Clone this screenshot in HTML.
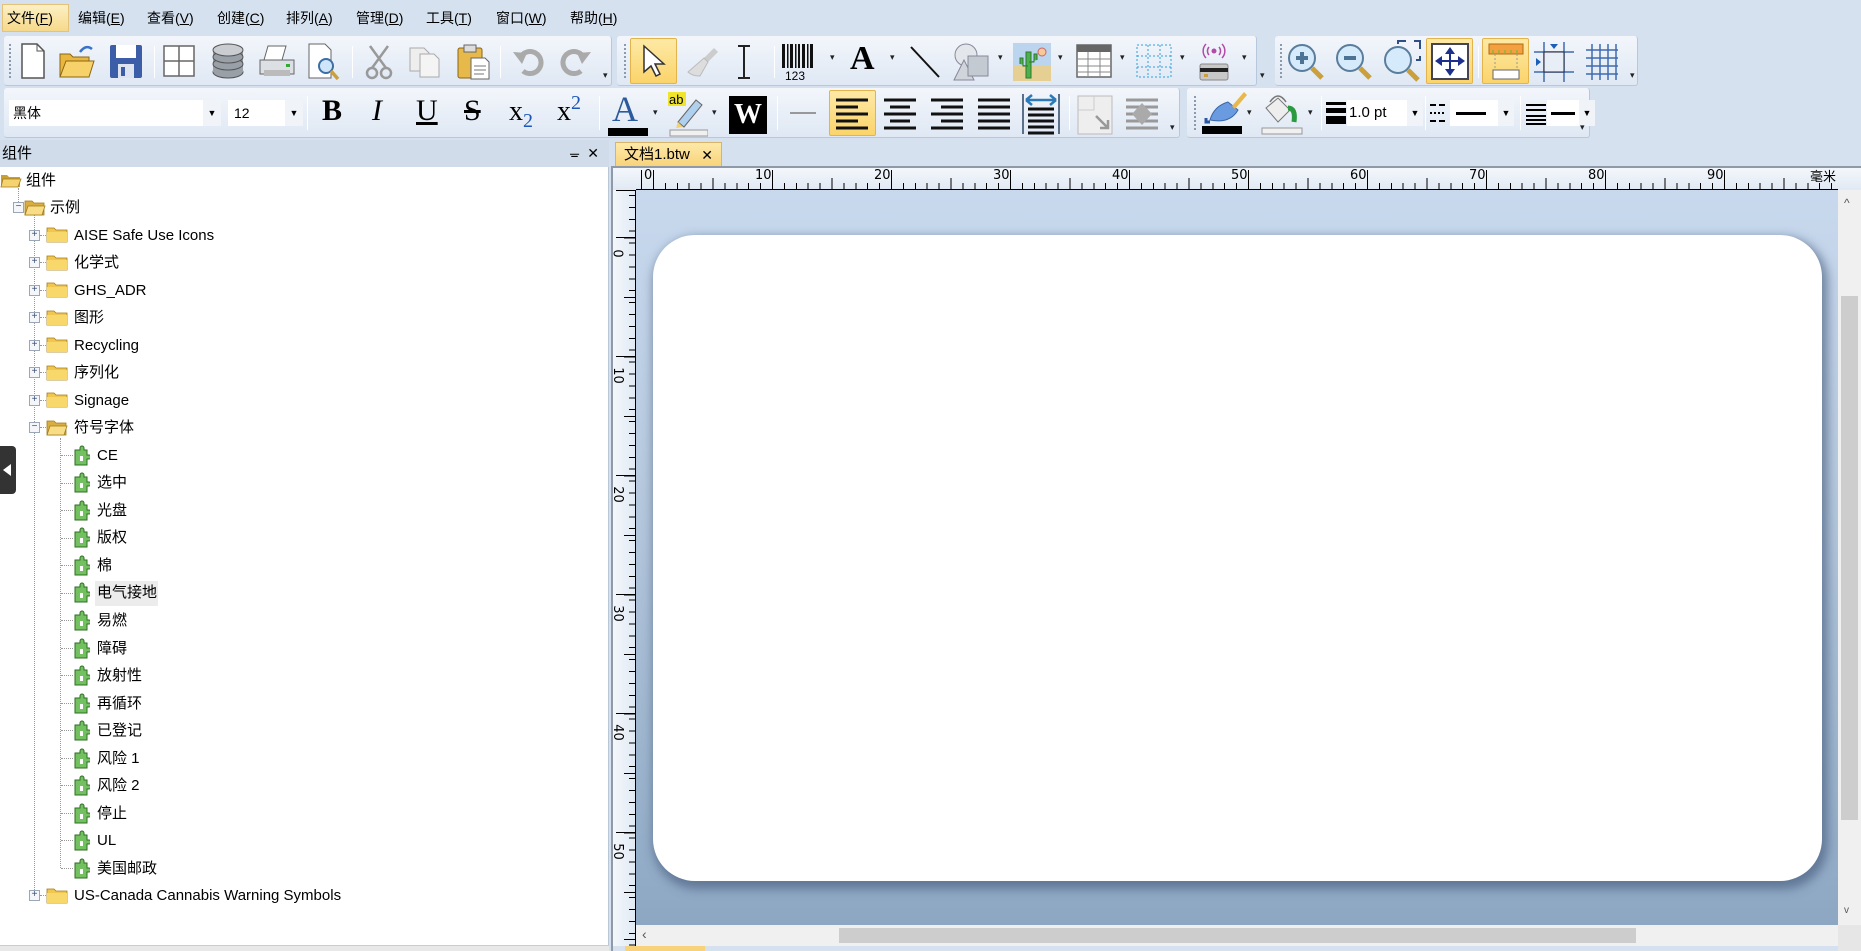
<!DOCTYPE html>
<html><head><meta charset="utf-8">
<style>
*{box-sizing:border-box;margin:0;padding:0}
body{width:1861px;height:951px;overflow:hidden;position:relative;background:#d5e1ef;font-family:"Liberation Sans","Noto Sans CJK SC",sans-serif;color:#000}
.a{position:absolute}
.menu{top:4px;height:28px;line-height:28px;font-size:14px}
.mi{position:absolute;top:0;height:28px;padding:0 4px}
.panel{position:absolute;border-radius:3px;background:linear-gradient(#f3f6fb,#dfe8f4);border-right:1px solid #b8c8dc;border-bottom:1px solid #b8c8dc}
.grip{position:absolute;width:2px;border-left:2px dotted #8a9bb0}
.sep{position:absolute;width:1px;background:#a9b9cc;border-right:1px solid #fff}
.hl{position:absolute;background:linear-gradient(#fde9a6,#fbd46a);border:1px solid #e3b44b;border-radius:2px}
.ic{position:absolute}
.dd{position:absolute;font-size:9px;color:#222}
.row{position:absolute;height:27px;line-height:27px;font-size:15px;white-space:nowrap}
.vl{position:absolute;border-left:1px dotted #999}
.hline{position:absolute;border-top:1px dotted #999;height:0}
.exp{position:absolute;width:11px;height:11px;border:1px solid #9aa7b8;background:#f4f6f9;font-size:10px;line-height:8px;text-align:center;color:#3a4f73}
.fold{position:absolute;width:22px;height:17px}
.pz{position:absolute;width:17px;height:21px}
</style></head><body>

<!-- menu -->
<div class="a menu" style="left:0;width:1861px">
<div class="mi" style="left:2px;width:67px;background:linear-gradient(#fdf0c4,#f6d98a);border:1px solid #e4c27a;line-height:26px">文件(<u>F</u>)</div>
<div class="mi" style="left:74px">编辑(<u>E</u>)</div>
<div class="mi" style="left:143px">查看(<u>V</u>)</div>
<div class="mi" style="left:213px">创建(<u>C</u>)</div>
<div class="mi" style="left:282px">排列(<u>A</u>)</div>
<div class="mi" style="left:352px">管理(<u>D</u>)</div>
<div class="mi" style="left:422px">工具(<u>T</u>)</div>
<div class="mi" style="left:492px">窗口(<u>W</u>)</div>
<div class="mi" style="left:566px">帮助(<u>H</u>)</div>
</div>

<!-- toolbar row 1 -->
<div class="panel" style="left:4px;top:36px;width:608px;height:50px"></div>
<div class="grip" style="left:9px;top:44px;height:34px"></div>
<div class="panel" style="left:617px;top:36px;width:640px;height:50px"></div>
<div class="grip" style="left:624px;top:44px;height:34px"></div>
<div class="panel" style="left:1275px;top:36px;width:363px;height:50px"></div>
<div class="grip" style="left:1280px;top:44px;height:34px"></div>

<!-- row1 icons -->
<svg class="ic" style="left:18px;top:42px" width="30" height="38"><path d="M4 2h15l7 7v27H4z" fill="#fff" stroke="#555" stroke-width="1.5"/><path d="M19 2v7h7" fill="none" stroke="#555"/></svg>
<svg class="ic" style="left:58px;top:42px" width="38" height="38"><path d="M2 12h10l3 3h16v20H2z" fill="#e9b73d" stroke="#8a6516"/><path d="M2 35l6-16h28l-5 16z" fill="#f7d26b" stroke="#8a6516"/><path d="M22 10q6-8 12-3" fill="none" stroke="#3a72c8" stroke-width="2.5"/></svg>
<svg class="ic" style="left:108px;top:42px" width="36" height="38"><rect x="2" y="3" width="32" height="33" rx="2" fill="#3c5ea8"/><rect x="8" y="3" width="20" height="13" fill="#fff"/><rect x="10" y="22" width="16" height="14" fill="#dfe5f0"/><rect x="13" y="25" width="4" height="9" fill="#3c5ea8"/></svg>
<div class="sep" style="left:154px;top:46px;height:32px"></div>
<svg class="ic" style="left:162px;top:44px" width="36" height="34"><rect x="2" y="2" width="30" height="30" fill="#fff" stroke="#666" stroke-width="1.5"/><path d="M2 17h30M17 2v30" stroke="#666" stroke-width="1.5"/></svg>
<svg class="ic" style="left:210px;top:42px" width="36" height="38"><g fill="#9aa0a8" stroke="#555"><ellipse cx="18" cy="30" rx="15" ry="6"/><rect x="3" y="8" width="30" height="22" stroke="none"/><ellipse cx="18" cy="22" rx="15" ry="6"/><ellipse cx="18" cy="15" rx="15" ry="6"/><ellipse cx="18" cy="8" rx="15" ry="6" fill="#c9ccd0"/></g></svg>
<svg class="ic" style="left:258px;top:42px" width="38" height="38"><path d="M10 4h18l-4 14H6z" fill="#fff" stroke="#666"/><path d="M2 18h34v14H2z" fill="#dcdfe4" stroke="#666"/><rect x="6" y="28" width="26" height="6" fill="#bbb"/><rect x="28" y="22" width="4" height="3" fill="#3a3"/></svg>
<svg class="ic" style="left:306px;top:42px" width="36" height="40"><path d="M3 2h16l6 6v28H3z" fill="#fff" stroke="#666"/><circle cx="20" cy="24" r="7" fill="#cfe6fa" stroke="#3a6ea5" stroke-width="2"/><path d="M25 29l7 8" stroke="#c9a03c" stroke-width="3.5"/></svg>
<div class="sep" style="left:352px;top:46px;height:32px"></div>
<svg class="ic" style="left:364px;top:44px" width="30" height="36"><g stroke="#999" stroke-width="2.5" fill="none"><path d="M6 2l16 22M24 2L8 24"/><circle cx="8" cy="29" r="5"/><circle cx="22" cy="29" r="5"/></g></svg>
<svg class="ic" style="left:408px;top:44px" width="34" height="36"><path d="M2 4h14l5 5v18H2z" fill="#eee" stroke="#aaa"/><path d="M12 10h14l5 5v18H12z" fill="#f4f4f4" stroke="#aaa"/></svg>
<svg class="ic" style="left:455px;top:42px" width="36" height="40"><rect x="3" y="6" width="24" height="30" rx="2" fill="#e7b84a" stroke="#8a6516"/><rect x="9" y="3" width="12" height="7" fill="#ddd" stroke="#666"/><path d="M16 16h14l4 4v17H16z" fill="#fff" stroke="#666"/><path d="M19 24h12M19 28h12M19 32h10" stroke="#777"/></svg>
<div class="sep" style="left:500px;top:46px;height:32px"></div>
<svg class="ic" style="left:512px;top:46px" width="32" height="30"><path d="M8 12a11 11 0 1 1 3 13" fill="none" stroke="#aaa" stroke-width="5"/><path d="M1 6l9 12 5-11z" fill="#aaa"/></svg>
<svg class="ic" style="left:560px;top:46px" width="32" height="30"><path d="M24 12a11 11 0 1 0-3 13" fill="none" stroke="#aaa" stroke-width="5"/><path d="M31 6l-9 12-5-11z" fill="#aaa"/></svg>
<div class="dd" style="left:603px;top:70px">▾</div>

<div class="hl" style="left:630px;top:38px;width:47px;height:46px"></div>
<svg class="ic" style="left:640px;top:44px" width="26" height="34"><path d="M4 2v26l7-6 5 10 4-2-5-10h9z" fill="#fff" stroke="#333" stroke-width="1.5"/></svg>
<svg class="ic" style="left:686px;top:46px" width="34" height="32"><path d="M28 2l4 4-10 10-4-4z" fill="#ccc"/><path d="M18 12l4 4-8 14Q6 30 2 26z" fill="#ddd" stroke="#bbb"/></svg>
<svg class="ic" style="left:736px;top:44px" width="16" height="36"><path d="M2 2h12M2 34h12M8 2v32" stroke="#222" stroke-width="2"/></svg>
<div class="sep" style="left:774px;top:46px;height:32px"></div>
<svg class="ic" style="left:780px;top:42px" width="36" height="40"><g fill="#111"><rect x="2" y="2" width="3" height="24"/><rect x="7" y="2" width="1.5" height="24"/><rect x="10" y="2" width="3" height="24"/><rect x="15" y="2" width="1.5" height="24"/><rect x="18" y="2" width="2" height="24"/><rect x="22" y="2" width="3" height="24"/><rect x="27" y="2" width="1.5" height="24"/><rect x="30" y="2" width="3" height="24"/></g><text x="5" y="38" font-size="12" font-family="Liberation Sans">123</text></svg>
<div class="dd" style="left:830px;top:52px">▾</div>
<div class="a" style="left:850px;top:40px;font:bold 34px 'Liberation Serif',serif">A</div>
<div class="dd" style="left:890px;top:52px">▾</div>
<svg class="ic" style="left:908px;top:44px" width="34" height="36"><path d="M3 3l28 30" stroke="#111" stroke-width="2"/></svg>
<svg class="ic" style="left:950px;top:42px" width="44" height="40"><circle cx="16" cy="13" r="11" fill="#e3e7ec" stroke="#889"/><path d="M14 18L4 38h20z" fill="#d0d5dc" stroke="#889"/><rect x="18" y="14" width="20" height="20" fill="#c4cad2" stroke="#889"/></svg>
<div class="dd" style="left:998px;top:52px">▾</div>
<svg class="ic" style="left:1012px;top:42px" width="40" height="40"><rect x="1" y="1" width="38" height="38" fill="#bcd5ef"/><rect x="1" y="24" width="38" height="15" fill="#e6cf93"/><path d="M14 36V10h5v26zM8 22v-6h3v8h5M25 18v-6h-3v8h-5" fill="#4cb04c" stroke="#2b7a2b"/><circle cx="30" cy="10" r="4" fill="#f7c99a" stroke="#c66"/></svg>
<div class="dd" style="left:1058px;top:52px">▾</div>
<svg class="ic" style="left:1076px;top:44px" width="36" height="34"><rect x="1" y="1" width="34" height="32" fill="#fff" stroke="#666" stroke-width="1.5"/><rect x="1" y="1" width="34" height="7" fill="#666"/><path d="M1 15h34M1 22h34M1 28h34M12 8v25M24 8v25" stroke="#888"/></svg>
<div class="dd" style="left:1120px;top:52px">▾</div>
<svg class="ic" style="left:1136px;top:44px" width="36" height="34"><g stroke="#2ea0e0" stroke-dasharray="2 2" fill="none"><rect x="1" y="1" width="34" height="32"/><path d="M12 1v32M24 1v32M1 12h34M1 23h34"/></g></svg>
<div class="dd" style="left:1180px;top:52px">▾</div>
<svg class="ic" style="left:1196px;top:40px" width="36" height="42"><g fill="none" stroke="#b24aa8" stroke-width="1.5"><path d="M10 4a10 10 0 0 0 0 14M26 4a10 10 0 0 1 0 14M13 7a6 6 0 0 0 0 8M23 7a6 6 0 0 1 0 8"/></g><circle cx="18" cy="11" r="2.5" fill="#b24aa8"/><rect x="4" y="24" width="28" height="16" rx="2" fill="#c8c8c8" stroke="#888"/><rect x="4" y="28" width="28" height="4" fill="#222"/><rect x="8" y="34" width="4" height="3" fill="#c9a03c"/></svg>
<div class="dd" style="left:1242px;top:52px">▾</div>
<div class="dd" style="left:1260px;top:70px">▾</div>

<svg class="ic" style="left:1286px;top:42px" width="40" height="40"><circle cx="16" cy="16" r="13" fill="#d5ebfb" stroke="#5a7d9c" stroke-width="2"/><path d="M26 26l10 10" stroke="#c9a03c" stroke-width="5"/><path d="M10 16h12M16 10v12" stroke="#4d7394" stroke-width="4"/></svg>
<svg class="ic" style="left:1334px;top:42px" width="40" height="40"><circle cx="16" cy="16" r="13" fill="#d5ebfb" stroke="#5a7d9c" stroke-width="2"/><path d="M26 26l10 10" stroke="#c9a03c" stroke-width="5"/><path d="M10 16h12" stroke="#4d7394" stroke-width="4"/></svg>
<svg class="ic" style="left:1382px;top:40px" width="42" height="42"><circle cx="16" cy="20" r="13" fill="#d5ebfb" stroke="#5a7d9c" stroke-width="2"/><path d="M26 30l10 10" stroke="#c9a03c" stroke-width="5"/><path d="M16 4V1h8M32 1h6v8M38 16v4h-4" stroke="#2c4f86" stroke-width="2" fill="none"/></svg>
<div class="hl" style="left:1426px;top:38px;width:47px;height:46px"></div>
<svg class="ic" style="left:1431px;top:43px" width="38" height="37"><rect x="1" y="1" width="36" height="35" fill="#fff" stroke="#445" stroke-width="2"/><g fill="#1b2f8c"><path d="M19 4l-5 7h10zM19 33l-5-7h10zM4 18l7-5v10zM34 18l-7-5v10z"/></g><path d="M19 9v20M9 18h20" stroke="#1b2f8c" stroke-width="2"/></svg>
<div class="sep" style="left:1478px;top:46px;height:32px"></div>
<div class="hl" style="left:1482px;top:38px;width:47px;height:46px"></div>
<svg class="ic" style="left:1487px;top:42px" width="38" height="40"><rect x="2" y="2" width="34" height="10" fill="#f4a040" stroke="#b06a12"/><path d="M6 8v4M12 8v4M18 8v4M24 8v4M30 8v4" stroke="#6b3"/><path d="M8 12v16M30 12v16" stroke="#999" stroke-dasharray="2 2"/><rect x="6" y="28" width="26" height="9" fill="#fff" stroke="#666"/></svg>
<svg class="ic" style="left:1534px;top:42px" width="40" height="40"><path d="M10 0v40M30 0v40M0 10h40M0 30h40" stroke="#3e6bb0" stroke-width="1.5"/><rect x="10" y="10" width="20" height="20" fill="#e8eef6" stroke="#223"/><path d="M16 2l4 5 4-5zM2 16l5 4-5 4z" fill="#1c5fb8"/></svg>
<svg class="ic" style="left:1582px;top:42px" width="40" height="40"><path d="M4 8h32M4 16h32M4 24h32M4 32h32M10 2v36M18 2v36M26 2v36M34 2v36" stroke="#3e6bb0" stroke-width="1.5"/></svg>
<div class="dd" style="left:1630px;top:70px">▾</div>

<!-- toolbar row 2 -->
<div class="panel" style="left:4px;top:88px;width:1176px;height:50px"></div>
<div class="panel" style="left:1187px;top:88px;width:403px;height:50px"></div>
<div class="grip" style="left:1194px;top:96px;height:34px"></div>
<div class="a" style="left:9px;top:100px;width:212px;height:26px;background:#fff;font-size:14px;line-height:26px;padding-left:4px">黑体<span style="position:absolute;right:0;top:0;width:18px;height:26px;background:#f0f3f8;font-size:9px;text-align:center">▼</span></div>
<div class="a" style="left:228px;top:100px;width:75px;height:26px;background:#fff;font-size:14px;line-height:26px;padding-left:6px">12<span style="position:absolute;right:0;top:0;width:18px;height:26px;background:#f0f3f8;font-size:9px;text-align:center">▼</span></div>
<div class="sep" style="left:307px;top:96px;height:34px"></div>
<div class="a" style="left:322px;top:94px;font:bold 30px 'Liberation Serif',serif">B</div>
<div class="a" style="left:372px;top:94px;font:italic 30px 'Liberation Serif',serif">I</div>
<div class="a" style="left:416px;top:94px;font:30px 'Liberation Serif',serif;text-decoration:underline">U</div>
<div class="a" style="left:464px;top:94px;font:30px 'Liberation Serif',serif;text-decoration:line-through">S</div>
<div class="a" style="left:509px;top:96px;font:28px 'Liberation Serif',serif">x<span style="font-size:20px;color:#1d56b8;vertical-align:-7px">2</span></div>
<div class="a" style="left:557px;top:92px;font:28px 'Liberation Serif',serif">x<span style="font-size:20px;color:#1d56b8;vertical-align:11px">2</span></div>
<div class="sep" style="left:599px;top:96px;height:34px"></div>
<div class="a" style="left:612px;top:88px;font:36px 'Liberation Serif',serif;color:#2b5b9c">A</div>
<div class="a" style="left:608px;top:128px;width:40px;height:8px;background:#000"></div>
<div class="dd" style="left:653px;top:107px">▾</div>
<svg class="ic" style="left:668px;top:92px" width="40" height="46"><rect x="0" y="0" width="18" height="14" fill="#f0e52c"/><text x="1" y="12" font-size="13" font-family="Liberation Sans">ab</text><path d="M10 30l18-22 6 5-18 22z" fill="#b0d0f0" stroke="#666"/><path d="M10 30l-2 6 7-1z" fill="#f0d070"/><rect x="2" y="38" width="38" height="6" fill="#f0f0f0" stroke="#999"/></svg>
<div class="dd" style="left:712px;top:107px">▾</div>
<div class="a" style="left:729px;top:96px;width:38px;height:38px;background:#000;color:#fff;font:bold 28px 'Liberation Serif',serif;text-align:center;line-height:38px">W</div>
<div class="sep" style="left:777px;top:96px;height:34px"></div>
<div class="a" style="left:790px;top:112px;width:26px;height:2px;background:#999"></div>
<div class="hl" style="left:829px;top:90px;width:47px;height:46px"></div>
<svg class="ic" style="left:832px;top:96px" width="40" height="36"><g stroke="#111" stroke-width="3"><path d="M4 4h32M4 11h22M4 18h32M4 25h22M4 32h32"/></g></svg>
<svg class="ic" style="left:880px;top:96px" width="40" height="36"><g stroke="#111" stroke-width="3"><path d="M4 4h32M10 11h20M4 18h32M10 25h20M4 32h32"/></g></svg>
<svg class="ic" style="left:927px;top:96px" width="40" height="36"><g stroke="#111" stroke-width="3"><path d="M4 4h32M14 11h22M4 18h32M14 25h22M4 32h32"/></g></svg>
<svg class="ic" style="left:974px;top:96px" width="40" height="36"><g stroke="#111" stroke-width="3"><path d="M4 4h32M4 11h32M4 18h32M4 25h32M4 32h32"/></g></svg>
<svg class="ic" style="left:1020px;top:92px" width="42" height="44"><path d="M3 2v40M39 2v40" stroke="#5a6f88" stroke-width="2"/><path d="M6 8h30M6 8l6-5M6 8l6 5M36 8l-6-5M36 8l-6 5" stroke="#2c7ab8" stroke-width="2.5" fill="none"/><g stroke="#111" stroke-width="3"><path d="M8 17h26M8 23h26M8 29h26M8 35h26M8 41h26"/></g></svg>
<div class="sep" style="left:1069px;top:96px;height:34px"></div>
<svg class="ic" style="left:1076px;top:94px" width="40" height="42"><rect x="2" y="2" width="34" height="38" fill="#eee" stroke="#bbb"/><path d="M2 16h16V2" fill="none" stroke="#ccc"/><path d="M20 22l12 12M32 26v8h-8" stroke="#999" stroke-width="2.5" fill="none"/></svg>
<svg class="ic" style="left:1122px;top:96px" width="40" height="36"><g stroke="#999" stroke-width="3"><path d="M4 4h32M4 11h32M4 18h32M4 25h32M4 32h32"/></g><path d="M20 7l10 11-10 11-10-11z" fill="#aaa"/></svg>
<div class="dd" style="left:1170px;top:122px">▾</div>

<svg class="ic" style="left:1200px;top:90px" width="50" height="46"><path d="M10 30q4-14 18-18l10 8q-8 14-28 10z" fill="#6a9ae0" stroke="#3a66a8"/><path d="M32 16l12-14 3 3-12 14z" fill="#e8b84a"/><path d="M6 28v4h4" stroke="#2a55a0" stroke-width="3" fill="none"/><rect x="2" y="36" width="40" height="8" fill="#000"/></svg>
<div class="dd" style="left:1247px;top:107px">▾</div>
<svg class="ic" style="left:1260px;top:90px" width="44" height="46"><path d="M6 18l12-10 12 12-12 12z" fill="#eee" stroke="#777"/><path d="M10 12q8-12 16 0" fill="none" stroke="#777" stroke-width="1.5"/><path d="M28 18q8 0 6 14" stroke="#2a9a40" stroke-width="5" fill="none"/><rect x="2" y="38" width="40" height="6" fill="#f0f0f0" stroke="#999"/></svg>
<div class="dd" style="left:1308px;top:107px">▾</div>
<div class="sep" style="left:1321px;top:96px;height:34px"></div>
<div class="a" style="left:1326px;top:102px;width:20px;height:22px;background:linear-gradient(#000 0 3px,transparent 3px 6px,#000 6px 11px,transparent 11px 14px,#000 14px)"></div>
<div class="a" style="left:1347px;top:100px;width:76px;height:26px;background:#fff;font-size:15px;line-height:26px;padding-left:2px">1.0 pt<span style="position:absolute;right:0;top:0;width:16px;height:26px;background:#f0f3f8;font-size:9px;text-align:center">▼</span></div>
<div class="sep" style="left:1425px;top:96px;height:34px"></div>
<svg class="ic" style="left:1428px;top:102px" width="26" height="24"><path d="M2 3h6M11 3h6M2 11h2M6 11h2M10 11h2M14 11h2M2 19h6M11 19h6" stroke="#000" stroke-width="2"/></svg>
<div class="a" style="left:1450px;top:100px;width:64px;height:26px;background:#fff"><div class="a" style="left:6px;top:12px;width:30px;height:3px;background:#000"></div><span style="position:absolute;right:0;top:0;width:16px;height:26px;background:#f0f3f8;font-size:9px;line-height:26px;text-align:center">▼</span></div>
<div class="sep" style="left:1520px;top:96px;height:34px"></div>
<svg class="ic" style="left:1524px;top:102px" width="24" height="24"><path d="M2 3h20M2 8h20M2 14h20M2 18h20M2 22h20" stroke="#000" stroke-width="2"/></svg>
<div class="a" style="left:1547px;top:100px;width:48px;height:26px;background:#fff"><div class="a" style="left:4px;top:12px;width:24px;height:3px;background:#000"></div><span style="position:absolute;right:0;top:0;width:16px;height:26px;background:#f0f3f8;font-size:9px;line-height:26px;text-align:center">▼</span></div>
<div class="dd" style="left:1580px;top:122px">▾</div>

<!-- left panel -->
<div class="a" style="left:0;top:140px;width:609px;height:811px;background:#fff;border-right:1px solid #b8c6d6"></div>
<div class="a" style="left:0;top:140px;width:609px;height:27px;background:#d0dcea;font-size:15px;line-height:27px;padding-left:2px">组件<span style="position:absolute;right:30px;font-size:13px">ᚚ</span><span style="position:absolute;right:10px;font-size:14px">✕</span></div>
<div class="a" style="left:0;top:945px;width:609px;height:6px;background:#e8e8e8;border-top:1px solid #ccc"></div>
<div class="a" style="left:0;top:446px;width:16px;height:48px;background:#333;border-radius:0 4px 4px 0"><div class="a" style="left:3px;top:18px;border-right:8px solid #fff;border-top:6px solid transparent;border-bottom:6px solid transparent"></div></div>

<!-- tree lines -->
<div class="vl" style="left:18px;top:188px;height:20px"></div>
<div class="vl" style="left:34px;top:214px;height:682px"></div>
<div class="vl" style="left:60px;top:438px;height:430px"></div>
<div class="hline" style="left:18px;top:207px;width:8px"></div>

<!-- rows -->
<svg class="fold" style="left:0;top:171px" viewBox="0 0 22 17"><path d="M1 4h6l2 2h11v10H1z" fill="#c9a032"/><path d="M3 8h18l-3 8H1z" fill="#f5d370" stroke="#a47b1a" stroke-width=".8"/></svg>
<div class="row" style="left:26px;top:167px">组件</div>

<div class="exp" style="left:13px;top:202px">−</div>
<svg class="fold" style="left:24px;top:199px" viewBox="0 0 22 17"><path d="M1 2h7l2 2h10v12H1z" fill="#d9ad40" stroke="#a47b1a" stroke-width=".8"/><path d="M4 7h17l-3 9H1z" fill="#f8dc86" stroke="#a47b1a" stroke-width=".8"/></svg>
<div class="row" style="left:50px;top:194px">示例</div>

<div class="exp" style="left:29px;top:230px">+</div><div class="hline" style="left:40px;top:235px;width:6px"></div>
<svg class="fold" style="left:46px;top:226px" viewBox="0 0 22 17"><path d="M1 2h7l2 2h11v12H1z" fill="#f0c64e" stroke="#a47b1a" stroke-width=".8"/><rect x="1" y="6" width="20" height="10" fill="#f8d86a"/></svg>
<div class="row" style="left:74px;top:222px">AISE Safe Use Icons</div>

<div class="exp" style="left:29px;top:257px">+</div><div class="hline" style="left:40px;top:262px;width:6px"></div>
<svg class="fold" style="left:46px;top:254px" viewBox="0 0 22 17"><path d="M1 2h7l2 2h11v12H1z" fill="#f0c64e" stroke="#a47b1a" stroke-width=".8"/><rect x="1" y="6" width="20" height="10" fill="#f8d86a"/></svg>
<div class="row" style="left:74px;top:249px">化学式</div>

<div class="exp" style="left:29px;top:285px">+</div><div class="hline" style="left:40px;top:290px;width:6px"></div>
<svg class="fold" style="left:46px;top:281px" viewBox="0 0 22 17"><path d="M1 2h7l2 2h11v12H1z" fill="#f0c64e" stroke="#a47b1a" stroke-width=".8"/><rect x="1" y="6" width="20" height="10" fill="#f8d86a"/></svg>
<div class="row" style="left:74px;top:277px">GHS_ADR</div>

<div class="exp" style="left:29px;top:312px">+</div><div class="hline" style="left:40px;top:317px;width:6px"></div>
<svg class="fold" style="left:46px;top:309px" viewBox="0 0 22 17"><path d="M1 2h7l2 2h11v12H1z" fill="#f0c64e" stroke="#a47b1a" stroke-width=".8"/><rect x="1" y="6" width="20" height="10" fill="#f8d86a"/></svg>
<div class="row" style="left:74px;top:304px">图形</div>

<div class="exp" style="left:29px;top:340px">+</div><div class="hline" style="left:40px;top:345px;width:6px"></div>
<svg class="fold" style="left:46px;top:336px" viewBox="0 0 22 17"><path d="M1 2h7l2 2h11v12H1z" fill="#f0c64e" stroke="#a47b1a" stroke-width=".8"/><rect x="1" y="6" width="20" height="10" fill="#f8d86a"/></svg>
<div class="row" style="left:74px;top:332px">Recycling</div>

<div class="exp" style="left:29px;top:367px">+</div><div class="hline" style="left:40px;top:372px;width:6px"></div>
<svg class="fold" style="left:46px;top:364px" viewBox="0 0 22 17"><path d="M1 2h7l2 2h11v12H1z" fill="#f0c64e" stroke="#a47b1a" stroke-width=".8"/><rect x="1" y="6" width="20" height="10" fill="#f8d86a"/></svg>
<div class="row" style="left:74px;top:359px">序列化</div>

<div class="exp" style="left:29px;top:395px">+</div><div class="hline" style="left:40px;top:400px;width:6px"></div>
<svg class="fold" style="left:46px;top:391px" viewBox="0 0 22 17"><path d="M1 2h7l2 2h11v12H1z" fill="#f0c64e" stroke="#a47b1a" stroke-width=".8"/><rect x="1" y="6" width="20" height="10" fill="#f8d86a"/></svg>
<div class="row" style="left:74px;top:387px">Signage</div>

<div class="exp" style="left:29px;top:422px">−</div><div class="hline" style="left:40px;top:427px;width:6px"></div>
<svg class="fold" style="left:46px;top:419px" viewBox="0 0 22 17"><path d="M1 2h7l2 2h10v12H1z" fill="#d9ad40" stroke="#a47b1a" stroke-width=".8"/><path d="M4 7h17l-3 9H1z" fill="#f8dc86" stroke="#a47b1a" stroke-width=".8"/></svg>
<div class="row" style="left:74px;top:414px">符号字体</div>

<!-- leaf rows -->
<div class="a" style="left:95px;top:581px;width:63px;height:25px;background:#ececec"></div>
<div id="leaves"></div>
<div class="hline" style="left:61px;top:455px;width:12px"></div><svg class="pz" style="left:73px;top:445px" viewBox="0 0 17 21"><path d="M4 5h3V3a2 2 0 0 1 4 0v2h3v5h2a2 2 0 0 1 0 4h-2v6H2V5z" fill="#72c060" stroke="#2f6e22"/><path d="M7 11h3v5H7" fill="#fff"/></svg><div class="row" style="left:97px;top:442px">CE</div>
<div class="hline" style="left:61px;top:483px;width:12px"></div><svg class="pz" style="left:73px;top:472px" viewBox="0 0 17 21"><path d="M4 5h3V3a2 2 0 0 1 4 0v2h3v5h2a2 2 0 0 1 0 4h-2v6H2V5z" fill="#72c060" stroke="#2f6e22"/><path d="M7 11h3v5H7" fill="#fff"/></svg><div class="row" style="left:97px;top:469px">选中</div>
<div class="hline" style="left:61px;top:510px;width:12px"></div><svg class="pz" style="left:73px;top:500px" viewBox="0 0 17 21"><path d="M4 5h3V3a2 2 0 0 1 4 0v2h3v5h2a2 2 0 0 1 0 4h-2v6H2V5z" fill="#72c060" stroke="#2f6e22"/><path d="M7 11h3v5H7" fill="#fff"/></svg><div class="row" style="left:97px;top:497px">光盘</div>
<div class="hline" style="left:61px;top:538px;width:12px"></div><svg class="pz" style="left:73px;top:527px" viewBox="0 0 17 21"><path d="M4 5h3V3a2 2 0 0 1 4 0v2h3v5h2a2 2 0 0 1 0 4h-2v6H2V5z" fill="#72c060" stroke="#2f6e22"/><path d="M7 11h3v5H7" fill="#fff"/></svg><div class="row" style="left:97px;top:524px">版权</div>
<div class="hline" style="left:61px;top:565px;width:12px"></div><svg class="pz" style="left:73px;top:555px" viewBox="0 0 17 21"><path d="M4 5h3V3a2 2 0 0 1 4 0v2h3v5h2a2 2 0 0 1 0 4h-2v6H2V5z" fill="#72c060" stroke="#2f6e22"/><path d="M7 11h3v5H7" fill="#fff"/></svg><div class="row" style="left:97px;top:552px">棉</div>
<div class="hline" style="left:61px;top:593px;width:12px"></div><svg class="pz" style="left:73px;top:582px" viewBox="0 0 17 21"><path d="M4 5h3V3a2 2 0 0 1 4 0v2h3v5h2a2 2 0 0 1 0 4h-2v6H2V5z" fill="#72c060" stroke="#2f6e22"/><path d="M7 11h3v5H7" fill="#fff"/></svg><div class="row" style="left:97px;top:579px">电气接地</div>
<div class="hline" style="left:61px;top:620px;width:12px"></div><svg class="pz" style="left:73px;top:610px" viewBox="0 0 17 21"><path d="M4 5h3V3a2 2 0 0 1 4 0v2h3v5h2a2 2 0 0 1 0 4h-2v6H2V5z" fill="#72c060" stroke="#2f6e22"/><path d="M7 11h3v5H7" fill="#fff"/></svg><div class="row" style="left:97px;top:607px">易燃</div>
<div class="hline" style="left:61px;top:648px;width:12px"></div><svg class="pz" style="left:73px;top:638px" viewBox="0 0 17 21"><path d="M4 5h3V3a2 2 0 0 1 4 0v2h3v5h2a2 2 0 0 1 0 4h-2v6H2V5z" fill="#72c060" stroke="#2f6e22"/><path d="M7 11h3v5H7" fill="#fff"/></svg><div class="row" style="left:97px;top:635px">障碍</div>
<div class="hline" style="left:61px;top:675px;width:12px"></div><svg class="pz" style="left:73px;top:665px" viewBox="0 0 17 21"><path d="M4 5h3V3a2 2 0 0 1 4 0v2h3v5h2a2 2 0 0 1 0 4h-2v6H2V5z" fill="#72c060" stroke="#2f6e22"/><path d="M7 11h3v5H7" fill="#fff"/></svg><div class="row" style="left:97px;top:662px">放射性</div>
<div class="hline" style="left:61px;top:703px;width:12px"></div><svg class="pz" style="left:73px;top:693px" viewBox="0 0 17 21"><path d="M4 5h3V3a2 2 0 0 1 4 0v2h3v5h2a2 2 0 0 1 0 4h-2v6H2V5z" fill="#72c060" stroke="#2f6e22"/><path d="M7 11h3v5H7" fill="#fff"/></svg><div class="row" style="left:97px;top:690px">再循环</div>
<div class="hline" style="left:61px;top:730px;width:12px"></div><svg class="pz" style="left:73px;top:720px" viewBox="0 0 17 21"><path d="M4 5h3V3a2 2 0 0 1 4 0v2h3v5h2a2 2 0 0 1 0 4h-2v6H2V5z" fill="#72c060" stroke="#2f6e22"/><path d="M7 11h3v5H7" fill="#fff"/></svg><div class="row" style="left:97px;top:717px">已登记</div>
<div class="hline" style="left:61px;top:758px;width:12px"></div><svg class="pz" style="left:73px;top:748px" viewBox="0 0 17 21"><path d="M4 5h3V3a2 2 0 0 1 4 0v2h3v5h2a2 2 0 0 1 0 4h-2v6H2V5z" fill="#72c060" stroke="#2f6e22"/><path d="M7 11h3v5H7" fill="#fff"/></svg><div class="row" style="left:97px;top:745px">风险 1</div>
<div class="hline" style="left:61px;top:785px;width:12px"></div><svg class="pz" style="left:73px;top:775px" viewBox="0 0 17 21"><path d="M4 5h3V3a2 2 0 0 1 4 0v2h3v5h2a2 2 0 0 1 0 4h-2v6H2V5z" fill="#72c060" stroke="#2f6e22"/><path d="M7 11h3v5H7" fill="#fff"/></svg><div class="row" style="left:97px;top:772px">风险 2</div>
<div class="hline" style="left:61px;top:813px;width:12px"></div><svg class="pz" style="left:73px;top:803px" viewBox="0 0 17 21"><path d="M4 5h3V3a2 2 0 0 1 4 0v2h3v5h2a2 2 0 0 1 0 4h-2v6H2V5z" fill="#72c060" stroke="#2f6e22"/><path d="M7 11h3v5H7" fill="#fff"/></svg><div class="row" style="left:97px;top:800px">停止</div>
<div class="hline" style="left:61px;top:840px;width:12px"></div><svg class="pz" style="left:73px;top:830px" viewBox="0 0 17 21"><path d="M4 5h3V3a2 2 0 0 1 4 0v2h3v5h2a2 2 0 0 1 0 4h-2v6H2V5z" fill="#72c060" stroke="#2f6e22"/><path d="M7 11h3v5H7" fill="#fff"/></svg><div class="row" style="left:97px;top:827px">UL</div>
<div class="hline" style="left:61px;top:868px;width:12px"></div><svg class="pz" style="left:73px;top:858px" viewBox="0 0 17 21"><path d="M4 5h3V3a2 2 0 0 1 4 0v2h3v5h2a2 2 0 0 1 0 4h-2v6H2V5z" fill="#72c060" stroke="#2f6e22"/><path d="M7 11h3v5H7" fill="#fff"/></svg><div class="row" style="left:97px;top:855px">美国邮政</div>

<div class="exp" style="left:29px;top:890px">+</div><div class="hline" style="left:40px;top:895px;width:6px"></div>
<svg class="fold" style="left:46px;top:887px" viewBox="0 0 22 17"><path d="M1 2h7l2 2h11v12H1z" fill="#f0c64e" stroke="#a47b1a" stroke-width=".8"/><rect x="1" y="6" width="20" height="10" fill="#f8d86a"/></svg>
<div class="row" style="left:74px;top:882px">US-Canada Cannabis Warning Symbols</div>

<!-- document area -->
<div class="a" style="left:615px;top:142px;width:107px;height:25px;background:linear-gradient(#fde9a8,#f8d27a);border:1px solid #d8b46a;border-bottom:none;font-size:15px;line-height:24px;padding-left:8px">文档1.btw<span style="position:absolute;right:8px;font-size:14px">✕</span></div>
<div class="a" style="left:611px;top:166px;width:1250px;height:2px;background:#8e9aa8"></div>
<div class="a" style="left:611px;top:168px;width:2px;height:783px;background:#8e9aa8"></div>
<!-- horizontal ruler -->
<div class="a" style="left:613px;top:168px;width:1248px;height:22px;background:linear-gradient(#f4f7fb,#e0e9f4)"></div>
<div class="a" style="left:636px;top:183px;width:1202px;height:6px;background:repeating-linear-gradient(90deg,transparent 0 5px,#000 5px 6px,transparent 6px 11.9px);background-position:12px 0"></div>
<div class="a" style="left:636px;top:178px;width:1202px;height:11px;background:repeating-linear-gradient(90deg,#000 0 1px,transparent 1px 59.5px);background-position:17px 0"></div>
<div class="a" style="left:636px;top:170px;width:1202px;height:19px;background:repeating-linear-gradient(90deg,#000 0 1px,transparent 1px 119px);background-position:17px 0"></div>
<div class="a" style="left:636px;top:189px;width:1202px;height:1px;background:#000"></div>
<div class="a" style="left:613px;top:167px;width:1248px;height:22px;font:13px 'DejaVu Sans',sans-serif">
<span class="a" style="left:31px;top:1px">0</span><span class="a" style="left:142px;top:1px">10</span><span class="a" style="left:261px;top:1px">20</span><span class="a" style="left:380px;top:1px">30</span><span class="a" style="left:499px;top:1px">40</span><span class="a" style="left:618px;top:1px">50</span><span class="a" style="left:737px;top:1px">60</span><span class="a" style="left:856px;top:1px">70</span><span class="a" style="left:975px;top:1px">80</span><span class="a" style="left:1094px;top:1px">90</span><span class="a" style="left:1197px;top:-1px;font-family:'Noto Sans CJK SC',sans-serif">毫米</span></div>
<!-- vertical ruler -->
<div class="a" style="left:613px;top:190px;width:23px;height:761px;background:linear-gradient(90deg,#f4f7fb,#e0e9f4)"></div>
<div class="a" style="left:629px;top:190px;width:6px;height:761px;background:repeating-linear-gradient(180deg,transparent 0 5px,#000 5px 6px,transparent 6px 11.9px);background-position:0 0"></div>
<div class="a" style="left:624px;top:190px;width:11px;height:761px;background:repeating-linear-gradient(180deg,#000 0 1px,transparent 1px 59.5px);background-position:0 -12px"></div>
<div class="a" style="left:616px;top:190px;width:19px;height:761px;background:repeating-linear-gradient(180deg,#000 0 1px,transparent 1px 119px);background-position:0 47px"></div>
<div class="a" style="left:635px;top:190px;width:1px;height:761px;background:#000"></div>
<div class="a" style="left:613px;top:190px;width:20px;height:761px;font:13px 'DejaVu Sans',sans-serif">
<span class="a" style="left:0;top:56px;transform:rotate(90deg)">0</span>
<span class="a" style="left:-4px;top:178px;transform:rotate(90deg)">10</span>
<span class="a" style="left:-4px;top:297px;transform:rotate(90deg)">20</span>
<span class="a" style="left:-4px;top:416px;transform:rotate(90deg)">30</span>
<span class="a" style="left:-4px;top:535px;transform:rotate(90deg)">40</span>
<span class="a" style="left:-4px;top:654px;transform:rotate(90deg)">50</span></div>

<!-- canvas -->
<div class="a" style="left:636px;top:190px;width:1202px;height:735px;background:linear-gradient(#c8d9ee 0%,#b6c9de 40%,#8da7c3 100%);overflow:hidden">
<div class="a" style="left:17px;top:45px;width:1169px;height:646px;background:#fff;border-radius:42px;box-shadow:3px 5px 10px 3px rgba(70,92,125,.65)"></div>
</div>
<!-- scrollbars -->
<div class="a" style="left:1838px;top:190px;width:23px;height:735px;background:#f0f0f0"><div class="a" style="left:6px;top:6px;font-size:12px;color:#555">^</div><div class="a" style="left:3px;top:106px;width:17px;height:524px;background:#cdcdcd"></div><div class="a" style="left:6px;top:715px;font-size:10px;color:#555">v</div></div>
<div class="a" style="left:636px;top:925px;width:1202px;height:21px;background:#f0f0f0"><div class="a" style="left:6px;top:1px;font-size:14px;color:#555">‹</div><div class="a" style="left:203px;top:3px;width:797px;height:15px;background:#cdcdcd"></div></div>
<div class="a" style="left:1838px;top:925px;width:23px;height:26px;background:#e6e6e6"></div>
<div class="a" style="left:613px;top:946px;width:1225px;height:5px;background:#d5e1ef"></div>
<div class="a" style="left:625px;top:946px;width:80px;height:5px;background:#f8d27a"></div>
</body></html>
